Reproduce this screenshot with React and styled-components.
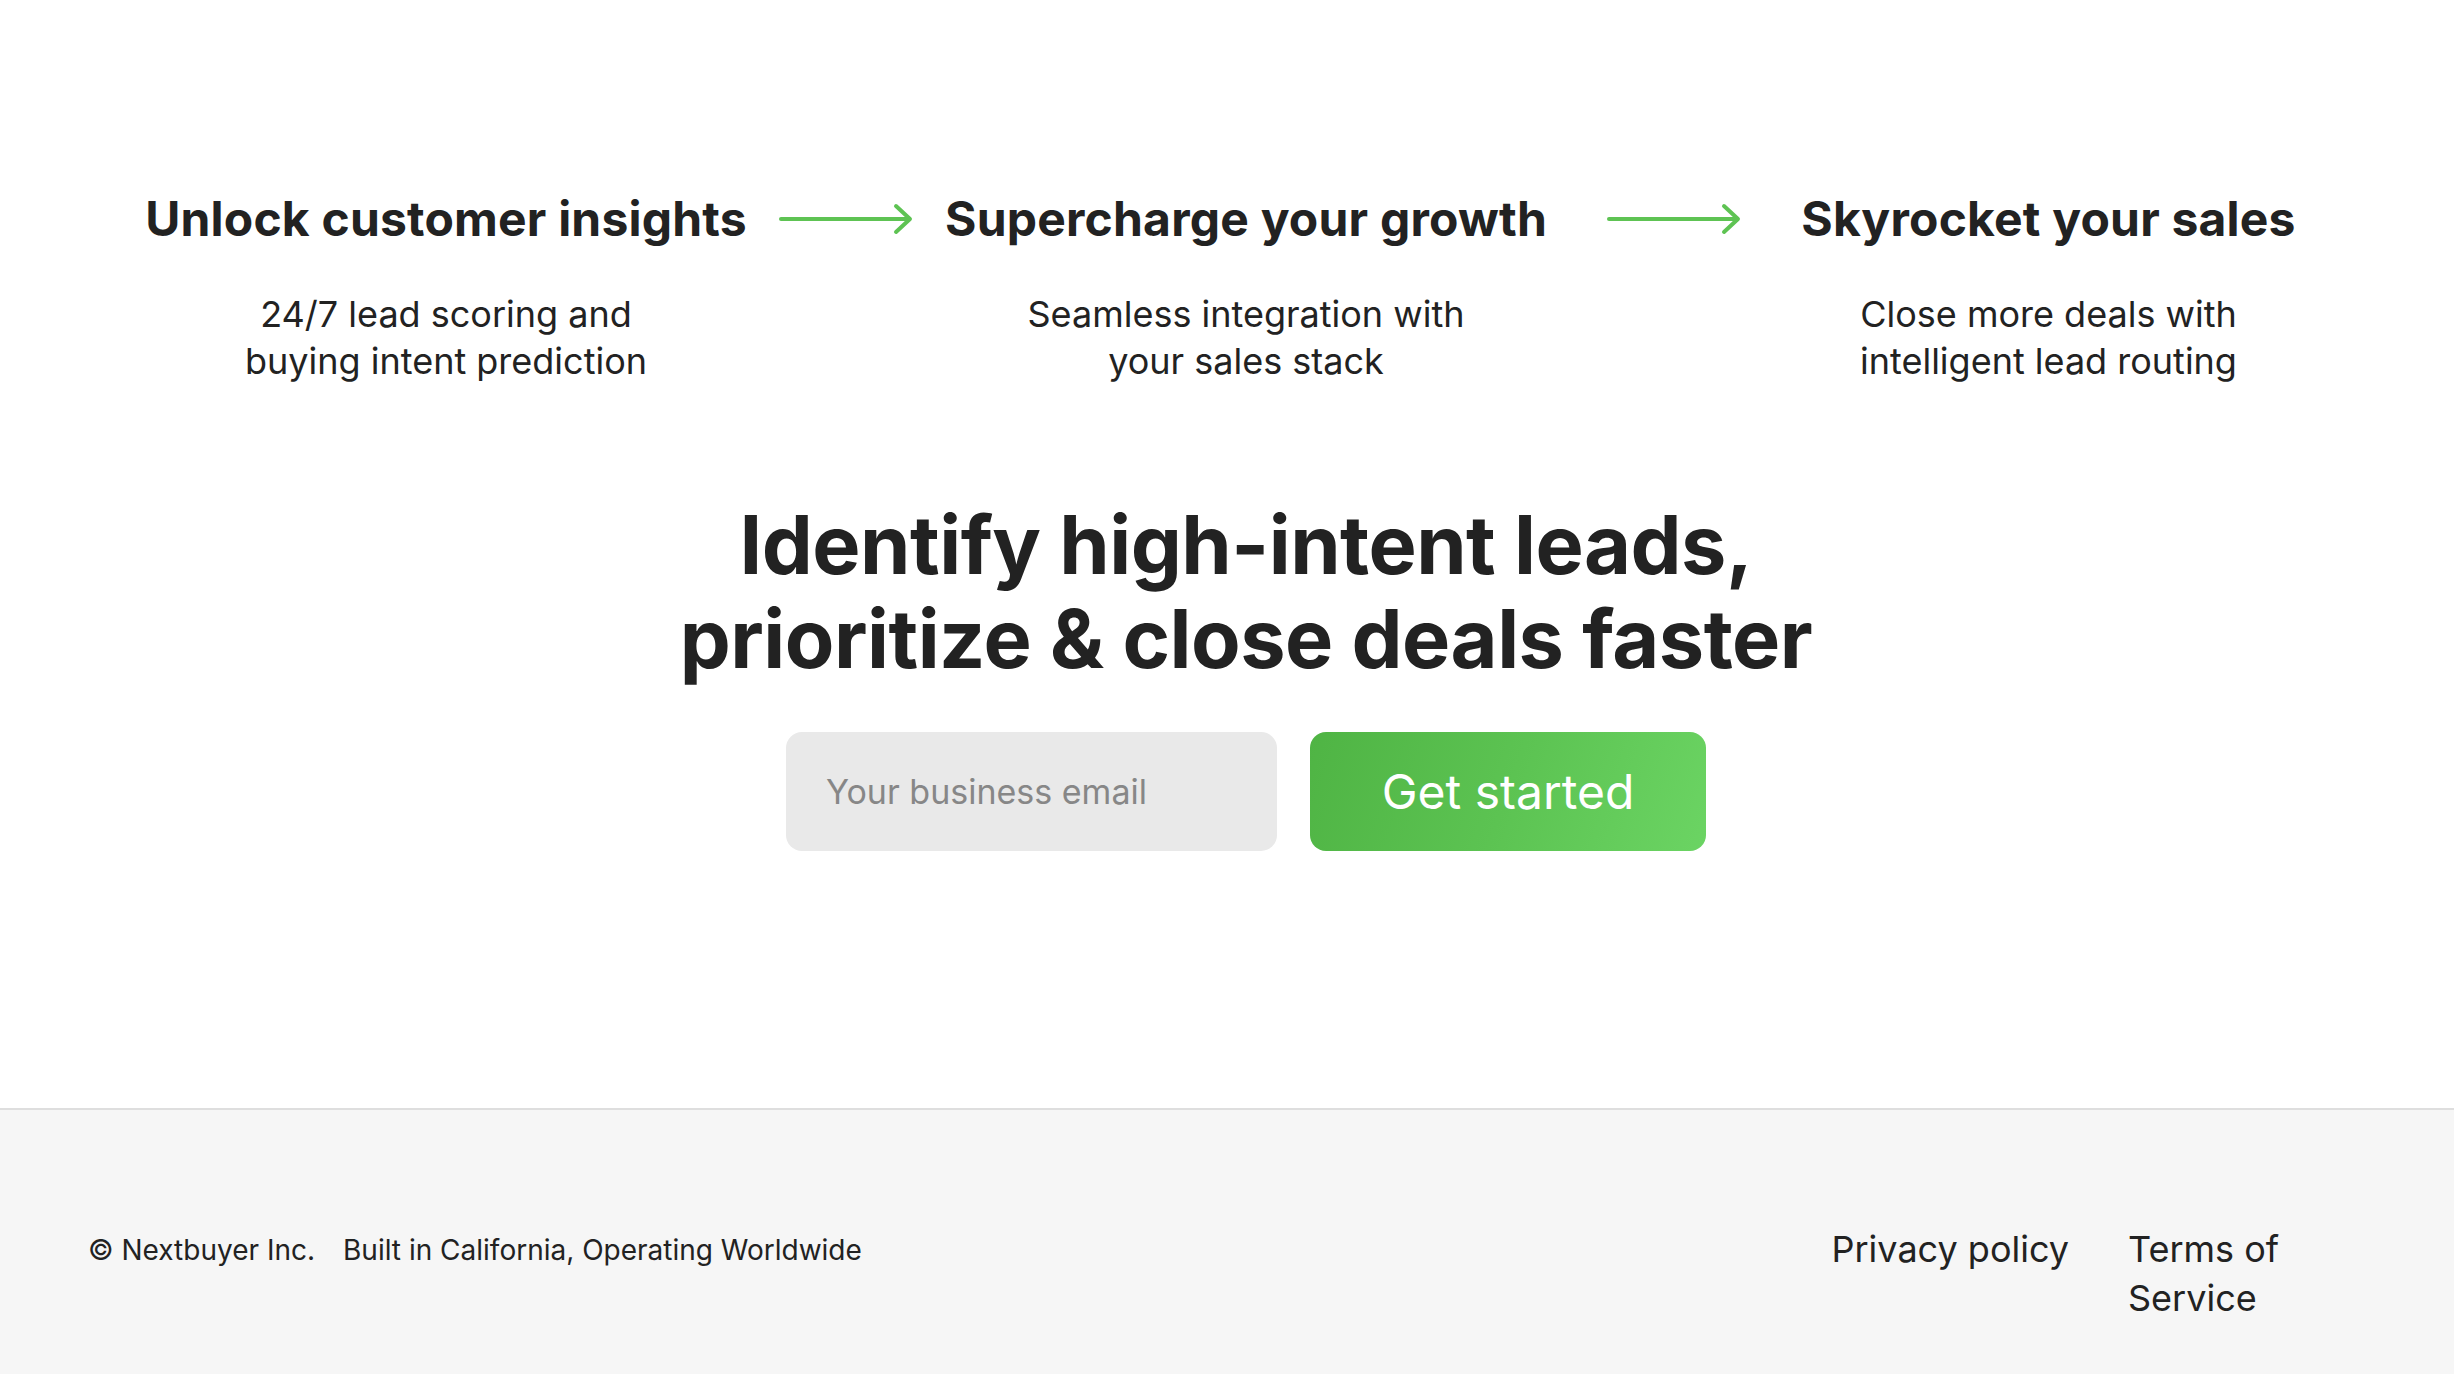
import React from "react";
import styled, { createGlobalStyle } from "styled-components";

const Global = createGlobalStyle`
  html, body { margin: 0; padding: 0; background: #ffffff; }
  body { font-family: Inter, "Noto Sans", "Liberation Sans", sans-serif; color: #222222; }
  * { box-sizing: border-box; }
`;

const Page = styled.div`
  display: flex;
  flex-direction: column;
  min-height: 1374px;
`;

const Main = styled.main`
  display: flex;
  flex-direction: column;
  align-items: center;
  padding: 190px 0 257px 38px;
`;

const Steps = styled.section`
  display: flex;
  align-items: flex-start;
  justify-content: center;
  margin-right: 50px;
`;

const Step = styled.div`
  width: ${(p) => p.$w}px;
  display: flex;
  flex-direction: column;
  align-items: center;
  text-align: center;
`;

const StepTitle = styled.h3`
  margin: 0;
  font-size: 48px;
  line-height: 58px;
  font-weight: 650;
  white-space: nowrap;
  letter-spacing: 0.2px;
  color: #222222;
`;

const StepText = styled.p`
  margin: 43px 0 0;
  font-size: 36px;
  line-height: 47px;
  font-weight: 400;
  color: #222222;
`;

const ArrowWrap = styled.div`
  flex: none;
  width: ${(p) => p.$gap}px;
  height: 58px;
  display: flex;
  align-items: center;
  justify-content: center;
  color: #5ec353;
`;

const Headline = styled.h1`
  margin: 113px 0 0;
  font-size: 81px;
  line-height: 94px;
  font-weight: 700;
  text-align: center;
  letter-spacing: -0.5px;
  color: #222222;
`;

const Form = styled.form`
  margin-top: 46px;
  display: flex;
  gap: 33px;
`;

const EmailInput = styled.input`
  width: 491px;
  height: 119px;
  border: none;
  outline: none;
  border-radius: 16px;
  background: #e9e9e9;
  padding: 0 40px;
  font-family: Inter, "Liberation Sans", sans-serif;
  font-size: 34px;
  color: #222;
  &::placeholder { color: #878787; }
`;

const StartButton = styled.button`
  width: 396px;
  height: 119px;
  border: none;
  border-radius: 16px;
  background: linear-gradient(110deg, #4fb444 0%, #5cc352 50%, #6bd463 100%);
  color: #ffffff;
  font-family: Inter, "Liberation Sans", sans-serif;
  font-size: 48px;
  font-weight: 400;
  cursor: pointer;
`;

const Footer = styled.footer`
  flex: 1;
  background: #f6f6f6;
  border-top: 2px solid #dedede;
  padding: 115px 156px 80px 88px;
  display: flex;
  justify-content: space-between;
  align-items: flex-start;
`;

const FooterLeft = styled.div`
  display: flex;
  gap: 28px;
  font-size: 28px;
  line-height: 50px;
  color: #222;
`;

const FooterLinks = styled.nav`
  display: flex;
  gap: 59px;
`;

const FooterLink = styled.a`
  display: block;
  width: ${(p) => (p.$w ? `${p.$w}px` : "auto")};
  font-size: 36px;
  line-height: 49px;
  color: #222;
  text-decoration: none;
`;

const Arrow = () => (
  <svg width="134" height="32" viewBox="0 0 134 32" fill="none" stroke="currentColor" strokeWidth="4" strokeLinecap="round" strokeLinejoin="round">
    <line x1="2" y1="16" x2="130" y2="16" />
    <polyline points="117,3 131,16 117,29" />
  </svg>
);

export default function App() {
  return (
    <Page>
      <Global />
      <Main>
        <Steps>
          <Step $w={595}>
            <StepTitle>Unlock customer insights</StepTitle>
            <StepText>24/7 lead scoring and<br />buying intent prediction</StepText>
          </Step>
          <ArrowWrap $gap={205}><Arrow /></ArrowWrap>
          <Step $w={595}>
            <StepTitle>Supercharge your growth</StepTitle>
            <StepText>Seamless integration with<br />your sales stack</StepText>
          </Step>
          <ArrowWrap $gap={260}><Arrow /></ArrowWrap>
          <Step $w={490}>
            <StepTitle>Skyrocket your sales</StepTitle>
            <StepText>Close more deals with<br />intelligent lead routing</StepText>
          </Step>
        </Steps>
        <Headline>Identify high-intent leads,<br />prioritize &amp; close deals faster</Headline>
        <Form onSubmit={(e) => e.preventDefault()}>
          <EmailInput type="email" placeholder="Your business email" />
          <StartButton type="submit">Get started</StartButton>
        </Form>
      </Main>
      <Footer>
        <FooterLeft>
          <span>© Nextbuyer Inc.</span>
          <span>Built in California, Operating Worldwide</span>
        </FooterLeft>
        <FooterLinks>
          <FooterLink href="#">Privacy policy</FooterLink>
          <FooterLink href="#" $w={170}>Terms of Service</FooterLink>
        </FooterLinks>
      </Footer>
    </Page>
  );
}
